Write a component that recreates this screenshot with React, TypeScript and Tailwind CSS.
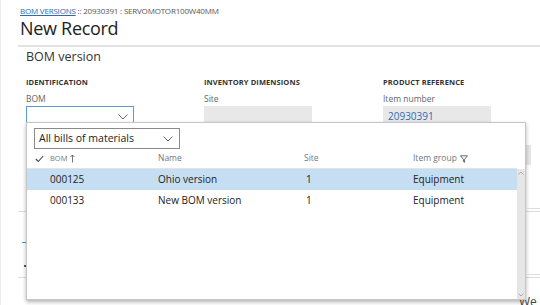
import React from "react";

const font = { fontFamily: '"Open Sans", "Noto Sans", sans-serif' };

function Chevron() {
  return (
    <svg width="10" height="6" viewBox="0 0 10 6">
      <path d="M0.5 0.5 L5 5 L9.5 0.5" fill="none" stroke="#666" strokeWidth="1" />
    </svg>
  );
}

function Field({ head, label, children, className = "" }: { head: string; label: string; children?: React.ReactNode; className?: string }) {
  return (
    <div className="flex flex-col">
      <div className="text-[7.5px] font-bold tracking-[0.1px] text-[#333] leading-[10px]">{head}</div>
      <div className="text-[8.5px] text-[#666] mt-[6px] leading-[11px]">{label}</div>
      <div className={`mt-[2px] w-[108px] h-[21px] flex items-center ${className}`}>{children}</div>
    </div>
  );
}

const cols = "grid grid-cols-[23px_108px_146px_109px_1fr] items-center";

export default function App() {
  const rows = [
    { bom: "000125", name: "Ohio version", site: "1", group: "Equipment", sel: true },
    { bom: "000133", name: "New BOM version", site: "1", group: "Equipment", sel: false },
  ];
  return (
    <div
      className="relative w-[540px] h-[305px] overflow-hidden bg-white border-l border-[#ececec] text-[#333]"
      style={font}
    >
      {/* Page header */}
      <div className="pl-[19px] pt-[6px] flex flex-col">
        <div className="text-[8px] leading-[10px] text-[#555] tracking-[-0.2px]">
          <span className="text-[#2b6cb0] underline">BOM VERSIONS</span>
          <span> :: 20930391 : SERVOMOTOR100W40MM</span>
        </div>
        <div className="text-[18px] leading-[22px] mt-[1px] text-[#222] tracking-[-0.3px]">New Record</div>
      </div>
      <div className="ml-[17px] mt-[6px] h-[2px] bg-[#e3e3e3]" />
      <div className="pl-[25px] flex flex-col">
        <div className="text-[12.5px] leading-[16px] mt-[2px] text-[#333]">BOM version</div>
        <div className="grid grid-cols-[178px_179px_160px] mt-[12px]">
          <Field head="IDENTIFICATION" label="BOM" className="border border-[#5b9bd5] bg-white justify-end pr-[5px]">
            <Chevron />
          </Field>
          <Field head="INVENTORY DIMENSIONS" label="Site" className="bg-[#e8e8e8]" />
          <div className="flex flex-col">
            <Field head="PRODUCT REFERENCE" label="Item number" className="bg-[#e8e8e8] pl-[5px] text-[10px] text-[#2e6bb5]">
              20930391
            </Field>
            <div className="mt-[18px] ml-[142px] w-[6px] h-[20px] bg-[#e6e6e6]" />
          </div>
        </div>
      </div>
      {/* background sections peeking behind the popup */}
      <div className="flex flex-col">
        <div className="ml-[17px] mt-[46px] h-px bg-[#dcdcdc]" />
        <div className="ml-[21px] mt-[30px] w-[4px] h-px bg-[#4a8fd6]" />
        <div className="ml-[23px] mt-[22px] w-[2px] h-[2px] bg-[#555]" />
        <div className="ml-[17px] mt-[10px] h-px bg-[#dcdcdc]" />
      </div>
      <div className="absolute left-[518px] top-[295px] text-[12px] leading-[14px] text-[#444]">We a</div>

      {/* Lookup popup */}
      <div className="absolute left-[25px] top-[122px] w-[500px] h-[178px] bg-white border border-[#c6c6c6] shadow-[0_2px_4px_rgba(0,0,0,0.3)] flex flex-col">
        <div className="pl-[7px] pt-[5px]">
          <div className="w-[146px] h-[21px] border border-[#8a8a8a] flex items-center justify-between pl-[4px] pr-[6px] text-[10.5px] text-[#222]">
            <span>All bills of materials</span>
            <Chevron />
          </div>
        </div>
        <div className="flex flex-1 min-h-0">
          <div className="flex-1 flex flex-col">
            <div className={`${cols} h-[19px] text-[8.5px] text-[#777]`}>
              <div className="flex justify-center pl-[2px]">
                <svg width="9" height="8" viewBox="0 0 9 8">
                  <path d="M0.8 4 L3.3 6.5 L8.2 1" fill="none" stroke="#444" strokeWidth="1.1" />
                </svg>
              </div>
              <div className="flex items-center gap-[3px]">
                <span className="text-[7.5px]">BOM</span>
                <svg width="5" height="9" viewBox="0 0 5 9">
                  <path d="M2.5 8.5 V1 M0.5 3 L2.5 1 L4.5 3" fill="none" stroke="#666" strokeWidth="0.9" />
                </svg>
              </div>
              <span>Name</span>
              <span>Site</span>
              <span className="flex items-center gap-[3px]">
                Item group
                <svg width="8" height="8" viewBox="0 0 8 8">
                  <path d="M0.5 0.8 H7.5 L4.6 4.2 V7.3 L3.4 6.5 V4.2 Z" fill="none" stroke="#555" strokeWidth="0.9" />
                </svg>
              </span>
            </div>
            <div className="h-px bg-[#e3e3e3]" />
            {rows.map((r) => (
              <div
                key={r.bom}
                className={`${cols} h-[21px] text-[10px] text-[#222] ${r.sel ? "bg-[#c6def2]" : ""}`}
              >
                <span />
                <span>{r.bom}</span>
                <span>{r.name}</span>
                <span className="pl-[2px]">{r.site}</span>
                <span>{r.group}</span>
              </div>
            ))}
          </div>
          <div className="w-[8px] mt-[20px] bg-[#e6e6e6] flex flex-col justify-between items-center py-[2px]">
            <svg width="6" height="4" viewBox="0 0 6 4">
              <path d="M0.5 3.5 L3 1 L5.5 3.5" fill="none" stroke="#999" strokeWidth="0.8" />
            </svg>
            <svg width="6" height="4" viewBox="0 0 6 4">
              <path d="M0.5 0.5 L3 3 L5.5 0.5" fill="none" stroke="#999" strokeWidth="0.8" />
            </svg>
          </div>
        </div>
      </div>
      {/* right-side background lines */}
      <div className="absolute left-[525px] top-[208px] w-[15px] h-px bg-[#dcdcdc]" />
      <div className="absolute left-[525px] top-[274px] w-[15px] h-px bg-[#dcdcdc]" />
    </div>
  );
}
